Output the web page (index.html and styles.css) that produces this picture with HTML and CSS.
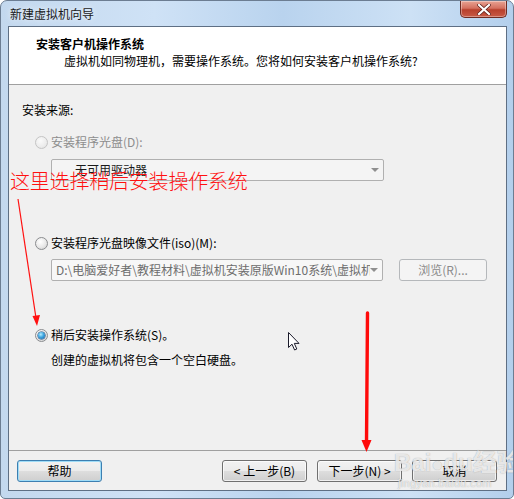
FILE: index.html
```html
<!DOCTYPE html>
<html lang="zh-CN">
<head>
<meta charset="utf-8">
<title>新建虚拟机向导</title>
<link rel="stylesheet" href="styles.css">
</head>
<body>
<div class="window">
  <div class="titlebar">
    <span class="title">新建虚拟机向导</span>
    <div class="close">
      <svg width="14" height="11" viewBox="0 0 14 11"><path d="M2 1 L12 10 M12 1 L2 10" stroke="#5a1c16" stroke-width="3.6" stroke-linecap="square"/><path d="M2 1 L12 10 M12 1 L2 10" stroke="#fff" stroke-width="2.2" stroke-linecap="square"/></svg>
    </div>
  </div>
  <div class="client">
    <div class="header">
      <div class="h-title">安装客户机操作系统</div>
      <div class="h-sub">虚拟机如同物理机，需要操作系统。您将如何安装客户机操作系统?</div>
    </div>
    <div class="content">
      <div class="src-label">安装来源:</div>
      <div class="radio-row r1 disabled"><span class="radio"></span><span>安装程序光盘(D):</span></div>
      <div class="combo c1"><span class="combo-text">无可用驱动器</span><span class="caret"></span></div>
      <div class="radio-row r2"><span class="radio"></span><span>安装程序光盘映像文件(iso)(M):</span></div>
      <div class="iso-row">
        <div class="combo c2"><span class="combo-text">D:\电脑爱好者\教程材料\虚拟机安装原版Win10系统\虚拟机</span><span class="caret"></span></div>
        <div class="browse">浏览(R)...</div>
      </div>
      <div class="radio-row r3"><span class="radio checked"></span><span>稍后安装操作系统(S)。</span></div>
      <div class="note">创建的虚拟机将包含一个空白硬盘。</div>
    </div>
    <div class="footer">
      <button class="btn help">帮助</button>
      <button class="btn back">&lt; 上一步(B)</button>
      <button class="btn">下一步(N) &gt;</button>
      <button class="btn">取消</button>
    </div>
  </div>

  <div class="annot">这里选择稍后安装操作系统</div>
  <svg class="arrows" width="514" height="499" viewBox="0 0 514 499">
    <line x1="18" y1="199" x2="36" y2="318" stroke="#ff1010" stroke-width="1.2"/>
    <polygon points="32.5,316 40,315 37,326" fill="#ff1010"/>
    <line x1="367.5" y1="313" x2="366.5" y2="443" stroke="#ff0a0a" stroke-width="3.4" stroke-linecap="round"/>
    <polygon points="361.5,440 371.5,440 366.5,452" fill="#ff0a0a"/>
  </svg>
  <svg class="cursor" width="14" height="20" viewBox="0 0 14 20">
    <path d="M0.5 0.5 L0.5 15.5 L4 12.2 L6.6 18 L8.8 17 L6.3 11.4 L11 11.4 Z" fill="#fff" stroke="#1a1a2a" stroke-width="1" stroke-linejoin="round"/>
  </svg>
  <div class="watermark">
    <div class="wm-logo">Bai<span class="paw">&#9679;</span>du经验</div>
    <div class="wm-url">jingyan.baidu.com</div>
  </div>
</div>
</body>
</html>
```

FILE: styles.css
```css
* { box-sizing: border-box; }

html, body {
  margin: 0;
  padding: 0;
  background: #ffffff;
}

body {
  font-family: "Noto Sans CJK SC", "Liberation Sans", sans-serif;
  font-size: 12px;
  color: #000;
}

.window {
  position: relative;
  width: 514px;
  height: 499px;
  display: flex;
  flex-direction: column;
  border-radius: 7px 7px 5px 5px;
  border: 1px solid #6c7d92;
  background: linear-gradient(to right, #c3d8ee 0%, #cfe2f6 30%, #b9d3ee 55%, #cde1f5 80%, #b3cfec 100%);
  overflow: hidden;
}

.titlebar {
  height: 25px;
  display: flex;
  align-items: flex-start;
  flex: none;
}

.title {
  padding-left: 9px;
  line-height: 25px;
  color: #1a1a1a;
  font-size: 12px;
  text-shadow: 0 0 6px rgba(255,255,255,0.9);
}

.close {
  margin-left: auto;
  margin-right: 6px;
  width: 47px;
  height: 17px;
  border: 1px solid #6e2b22;
  border-top: none;
  border-radius: 0 0 5px 5px;
  background: linear-gradient(to bottom, #e8a393 0%, #d4705f 45%, #b8402c 55%, #c85a45 100%);
  display: flex;
  align-items: center;
  justify-content: center;
  box-shadow: inset 0 0 0 1px rgba(255,255,255,0.35);
}

.client {
  flex: 1;
  margin: 0 6px 7px 7px;
  border: 1px solid #5e6f84;
  background: #f0f0f0;
  display: flex;
  flex-direction: column;
}

.header {
  height: 58px;
  flex: none;
  background: #ffffff;
  border-bottom: 1px solid #a0a0a0;
  padding: 9px 0 0 27px;
}

.h-title {
  font-weight: bold;
  line-height: 16px;
}

.h-sub {
  line-height: 16px;
  margin-top: 1px;
  padding-left: 28px;
}

.content {
  flex: 1;
  padding: 17px 0 0 13px;
  display: flex;
  flex-direction: column;
  align-items: flex-start;
}

.src-label {
  line-height: 16px;
}

.radio-row {
  display: flex;
  align-items: center;
  height: 16px;
  line-height: 16px;
  margin-left: 13px;
  gap: 3px;
}

.r1 { margin-top: 16px; }
.r2 { margin-top: 54px; }
.r3 { margin-top: 46px; }

.disabled { color: #8d8d8d; }

.radio {
  width: 13px;
  height: 13px;
  border-radius: 50%;
  border: 1px solid #8a8c8f;
  background: radial-gradient(circle at 40% 35%, #ffffff 0%, #e8e8e8 55%, #c9c9c9 100%);
  position: relative;
  flex: none;
}

.disabled .radio {
  border-color: #c4c4c4;
  background: radial-gradient(circle at 40% 35%, #fafafa 0%, #ececec 60%, #dddddd 100%);
}

.radio.checked::after {
  content: "";
  position: absolute;
  left: 2px;
  top: 2px;
  width: 7px;
  height: 7px;
  border-radius: 50%;
  background: radial-gradient(circle at 40% 35%, #b5ecff 0%, #3ea6e0 45%, #155aa0 100%);
  box-shadow: 0 0 0 0.5px #0f3f73;
}

.combo {
  height: 22px;
  border: 1px solid #b0b0b0;
  border-radius: 2px;
  background: #f4f4f4;
  display: flex;
  align-items: center;
  position: relative;
  overflow: hidden;
}

.c1 {
  width: 333px;
  margin-top: 9px;
  margin-left: 29px;
}

.combo-text {
  white-space: nowrap;
  overflow: hidden;
  line-height: 16px;
}

.c1 .combo-text {
  padding-left: 23px;
  color: #1a1a1a;
}

.caret {
  position: absolute;
  right: 4px;
  top: 8px;
  width: 0;
  height: 0;
  border-left: 4px solid transparent;
  border-right: 4px solid transparent;
  border-top: 4px solid #8f8f8f;
}

.iso-row {
  display: flex;
  gap: 16px;
  margin-top: 8px;
  margin-left: 29px;
}

.c2 {
  width: 332px;
  background: #f7f7f7;
}

.c2 .combo-text {
  padding-left: 4px;
  width: 318px;
  color: #6d6d6d;
}

.browse {
  width: 88px;
  height: 22px;
  border: 1px solid #b5b8bb;
  border-radius: 3px;
  background: #f4f4f4;
  color: #8a8a8a;
  text-align: center;
  line-height: 20px;
}

.note {
  margin-top: 9px;
  margin-left: 29px;
  line-height: 16px;
}

.footer {
  flex: none;
  height: 40px;
  border-top: 1px solid #a0a0a0;
  padding: 9px 9px 8px 8px;
  display: flex;
  gap: 10px;
}

.btn {
  width: 85px;
  height: 22px;
  font-family: "Noto Sans CJK SC", "Liberation Sans", sans-serif;
  font-size: 12px;
  color: #000;
  padding: 0;
  line-height: 18px;
  border: 1px solid #707070;
  border-radius: 3px;
  background: linear-gradient(to bottom, #f2f2f2 0%, #ebebeb 48%, #dddddd 52%, #cfcfcf 100%);
  box-shadow: inset 0 0 0 1px rgba(255,255,255,0.7);
}

.help {
  border-color: #3c7fb1;
  box-shadow: inset 0 0 0 1px #9fdcf7;
  background: linear-gradient(to bottom, #eaf6fd 0%, #d9f0fc 48%, #bee6fd 52%, #a7d9f5 100%);
  background: linear-gradient(to bottom, #f2f2f2 0%, #ebebeb 48%, #dddddd 52%, #cfcfcf 100%);
}

.back { margin-left: auto; }

.annot {
  position: absolute;
  left: 9px;
  top: 169px;
  font-size: 20px;
  line-height: 22px;
  font-weight: 300;
  color: #ff1010;
  letter-spacing: -0.2px;
  white-space: nowrap;
}

.arrows {
  position: absolute;
  left: -1px;
  top: -1px;
  pointer-events: none;
}

.cursor {
  position: absolute;
  left: 287px;
  top: 331px;
}

.watermark {
  position: absolute;
  left: 393px;
  top: 449px;
  pointer-events: none;
  color: rgba(255, 255, 255, 0.75);
  text-shadow: 0 0 1px rgba(120, 120, 120, 0.7);
}

.wm-logo {
  font-family: "Liberation Sans", "Noto Sans CJK SC", sans-serif;
  font-size: 24px;
  line-height: 26px;
  font-weight: bold;
  white-space: nowrap;
}

.paw {
  font-size: 20px;
}

.wm-url {
  font-family: "Liberation Sans", sans-serif;
  font-size: 11px;
  line-height: 12px;
  margin-left: 4px;
  letter-spacing: 0.3px;
}
```
